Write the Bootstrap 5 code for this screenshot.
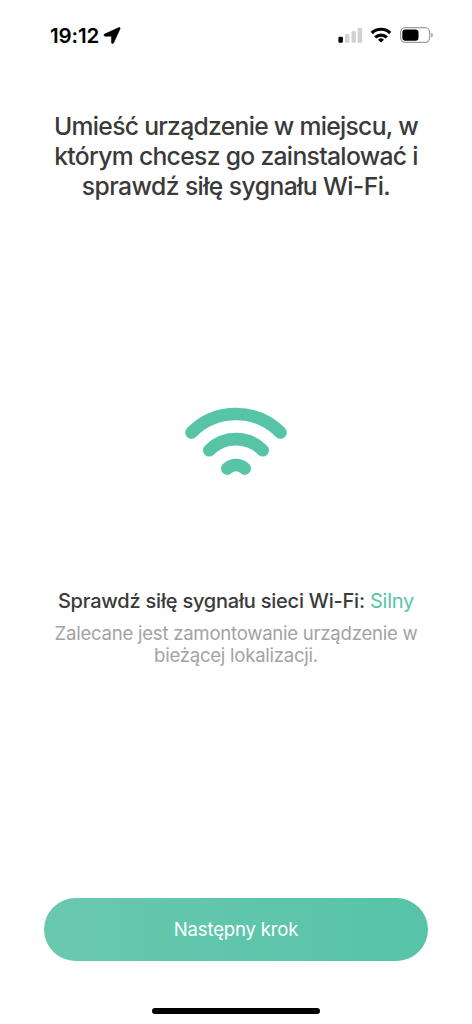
<!DOCTYPE html>
<html lang="pl">
<head>
<meta charset="utf-8">
<meta name="viewport" content="width=device-width, initial-scale=1">
<title>Sygnał Wi-Fi</title>
<link href="https://cdn.jsdelivr.net/npm/bootstrap@5.3.0/dist/css/bootstrap.min.css" rel="stylesheet">
<style>
body { font-family: Inter, "Liberation Sans", sans-serif; background: #fff; color: #3a3a3a; }
.screen { height: 1024px; overflow: hidden; }
.status-bar { height: 70px; padding: 0 38px 0 50px; color: #000; }
.clock { font-size: 20.5px; font-weight: 600; line-height: 24px; letter-spacing: -.1px; padding-top: 1px; }
.headline { margin-top: 41px; font-size: 24.7px; line-height: 30px; font-weight: 500; letter-spacing: -.71px; }
.headline span, .hint span { display: block; white-space: nowrap; }
.h-b { letter-spacing: -.68px; }
.h-c { letter-spacing: -.58px; }
.signal { margin-top: 205px; height: 70px; }
.result { margin-top: 113px; font-size: 20px; line-height: 24px; font-weight: 500; letter-spacing: -.22px; white-space: nowrap; }
.strong-signal { color: #58c4a7; font-weight: 400; }
.hint { margin-top: 8.5px; font-size: 18.6px; line-height: 22.3px; color: #a3a3a3; letter-spacing: -.26px; }
.next { width: 384px; height: 63px; margin-bottom: 47px; padding: 7px 12px 6px; border: 0; font-size: 18.5px; letter-spacing: -.15px; color: #fff; background: linear-gradient(90deg, #69c9af, #57c3a7); }
.home-bar { width: 168px; height: 6px; margin-bottom: 10px; background: #000; }
</style>
</head>
<body>
<div class="screen d-flex flex-column align-items-center">
  <header class="status-bar w-100 d-flex align-items-center justify-content-between flex-shrink-0">
    <div class="d-flex align-items-center">
      <span class="clock">19:12</span>
      <svg class="ms-1" width="18" height="18" viewBox="0 -.7 18 18" aria-hidden="true"><path d="M15.800.9 1.600 7.400c-1.200.6-.9 2.100.5 2.100h5.800q.5 0 .5.5v5.600c0 1.400 1.700 1.700 2.300.4l6.300-13.700c.5-1-.3-1.800-1.200-1.400z" stroke="#000" stroke-width=".5"/></svg>
    </div>
    <svg width="96" height="18" viewBox="338 26 96 18" aria-hidden="true">
      <rect x="338.400" y="36.700" width="4.500" height="6" rx="1.300"/>
      <g fill="#d2d2d2"><rect x="345" y="34" width="4.400" height="8.700" rx="1.200"/><rect x="351.500" y="31" width="4.400" height="11.700" rx="1.200"/><rect x="357.700" y="27.700" width="4.400" height="15" rx="1.200"/></g>
      <g fill="none" stroke="#000" stroke-width="3.200"><path d="M371.800 33a13.200 13.200 0 0 1 18.400 0"/><path d="M375.200 37.400a8.300 8.300 0 0 1 11.600 0"/></g>
      <path d="M381 42.600l-3-2.900a4.300 4.300 0 0 1 6 0z"/>
      <rect x="400.600" y="27.700" width="29" height="14.700" rx="4.600" fill="none" stroke="#9c9c9c" stroke-width="1.200"/>
      <rect x="402.300" y="29.400" width="16.200" height="11.300" rx="3"/>
      <path d="M431.200 32.700q1.700.8 1.700 2.400t-1.700 2.400z" fill="#9c9c9c"/>
    </svg>
  </header>
  <h1 class="headline mb-0 text-center"><span>Umieść urządzenie w miejscu, w</span><span class="h-b">którym chcesz go zainstalować i</span><span class="h-c">sprawdź siłę sygnału Wi-Fi.</span></h1>
  <svg class="signal flex-shrink-0" width="104" height="70" viewBox="184 406 104 70" fill="none" stroke="#58c4a7" stroke-width="12.600" stroke-linecap="round" stroke-linejoin="round" role="img" aria-label="Wi-Fi">
    <path d="M191.500 432.500a62.800 62.800 0 0 1 89 0"/>
    <path d="M209.300 450.200a37.800 37.800 0 0 1 53.400 0"/>
    <path d="M227.200 468.600a12.400 12.400 0 0 1 17.600 0"/>
  </svg>
  <p class="result mb-0 text-center">Sprawdź siłę sygnału sieci Wi-Fi: <span class="strong-signal">Silny</span></p>
  <p class="hint mb-0 text-center"><span>Zalecane jest zamontowanie urządzenie w</span><span>bieżącej lokalizacji.</span></p>
  <button type="button" class="next btn rounded-pill mt-auto flex-shrink-0">Następny krok</button>
  <div class="home-bar rounded-pill flex-shrink-0"></div>
</div>
<script src="https://cdn.jsdelivr.net/npm/bootstrap@5.3.0/dist/js/bootstrap.bundle.min.js"></script>
</body>
</html>
